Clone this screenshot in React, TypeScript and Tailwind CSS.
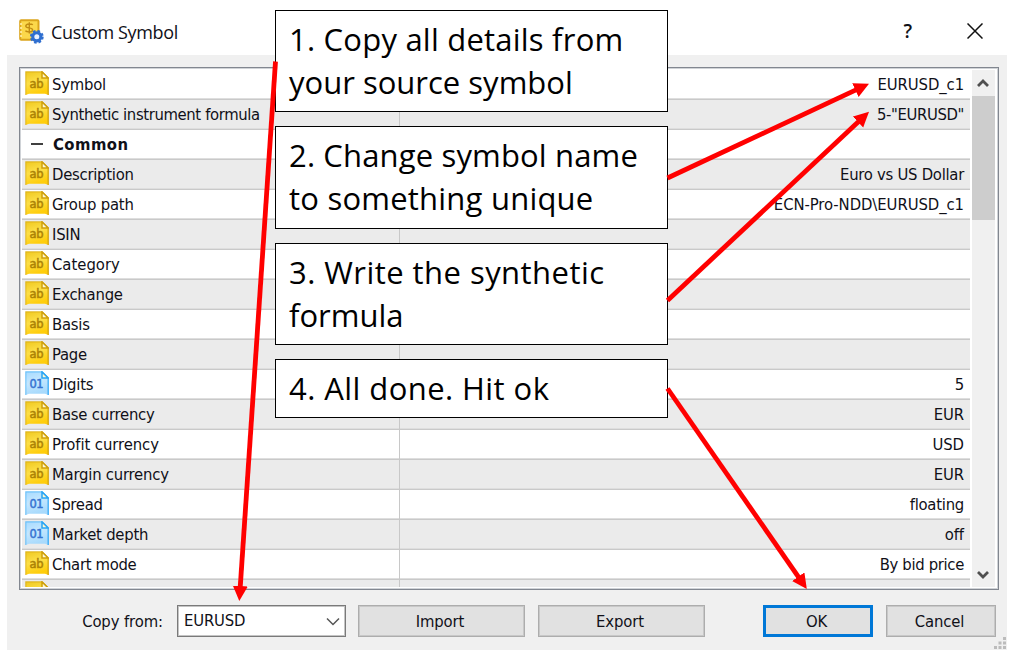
import type { ReactNode } from "react";

type Row = { name: string; value?: string; kind?: "text" | "number" | "group"; tracking?: string };

const rows: Row[] = [
  { name: "Symbol", value: "EURUSD_c1" },
  { name: "Synthetic instrument formula", value: '5-"EURUSD"', tracking: "tracking-[-0.37px]" },
  { name: "Common", kind: "group" },
  { name: "Description", value: "Euro vs US Dollar", tracking: "tracking-[-0.27px]" },
  { name: "Group path", value: "ECN-Pro-NDD\\EURUSD_c1", tracking: "tracking-[-0.2px]" },
  { name: "ISIN" },
  { name: "Category", tracking: "tracking-[0px]" },
  { name: "Exchange" },
  { name: "Basis" },
  { name: "Page" },
  { name: "Digits", value: "5", kind: "number" },
  { name: "Base currency", value: "EUR" },
  { name: "Profit currency", value: "USD", tracking: "tracking-[-0.07px]" },
  { name: "Margin currency", value: "EUR" },
  { name: "Spread", value: "floating", kind: "number", tracking: "tracking-[-0.25px]" },
  { name: "Market depth", value: "off", kind: "number" },
  { name: "Chart mode", value: "By bid price", tracking: "tracking-[-0.33px]" },
  { name: "" },
];

const arrows = [
  { x1: 275.5, y1: 61.5, x2: 239.3, y2: 601 },
  { x1: 667.5, y1: 178, x2: 869, y2: 83.8 },
  { x1: 667.5, y1: 300.5, x2: 869, y2: 111.8 },
  { x1: 667.5, y1: 388.5, x2: 806.8, y2: 589 },
];

function TypeIcon({ number, blank }: { number?: boolean; blank?: boolean }) {
  const edge = number ? "#2aa5f5" : "#cfa00c";
  return (
    <svg width="24" height="24" viewBox="0 0 24 24" className="mb-[3px] shrink-0" aria-hidden>
      <defs>
        <linearGradient id={number ? "num" : "txt"} x1="0" y1="0" x2="0.3" y2="1">
          <stop offset="0" stopColor={number ? "#a6daff" : "#efc81e"} />
          <stop offset="0.5" stopColor={number ? "#c4e7ff" : "#fcdf48"} />
          <stop offset="1" stopColor={number ? "#a8dafc" : "#ffcd0a"} />
        </linearGradient>
      </defs>
      <path d="M0.5 24V0.5H17L23.5 7V24L20 22.8H4Z" fill={`url(#${number ? "num" : "txt"})`} />
      <path d="M0.8 24V0.8H17" fill="none" stroke={edge} strokeWidth="1.2" opacity="0.5" />
      <path d="M17 0.8L23.2 7V24" fill="none" stroke={edge} strokeWidth="1.3" opacity="0.9" />
      <path d="M17 1V7H23.2Z" fill="#fff8d0" stroke={edge} strokeWidth="1.5" />
      {!blank && (
        <text
          x="11.3"
          y="17"
          textAnchor="middle"
          fontFamily="DejaVu Sans, sans-serif"
          fontSize="11.5"
          stroke={number ? "#3474d2" : "#ad8305"}
          strokeWidth="0.5"
          letterSpacing="-0.4"
          fill={number ? "#3474d2" : "#ad8305"}
        >
          {number ? "01" : "ab"}
        </text>
      )}
    </svg>
  );
}

function AppIcon() {
  return (
    <svg width="25" height="25" viewBox="0 0 25 25" className="mb-px" aria-hidden>
      <rect x="1.2" y="1.2" width="18.3" height="19.6" rx="1" fill="#fbd84b" stroke="#dba51c" strokeWidth="2" />
      <path d="M1 5h2M1 9h2M1 13h2M1 17h2" stroke="#fff1b5" strokeWidth="1.5" />
      <path
        d="M13.8 5.8C12.5 4.6 6.8 4.4 6.8 7.2C6.8 9.8 13.6 8 13.6 10.9C13.6 13.5 7.6 13.2 6.4 11.8M10.3 3.2V14.6"
        fill="none"
        stroke="#c28c12"
        strokeWidth="1.4"
      />
      <circle cx="17.8" cy="17.8" r="5.6" fill="#2f6fd0" />
      <circle
        cx="17.8"
        cy="17.8"
        r="5.9"
        fill="none"
        stroke="#2f6fd0"
        strokeWidth="2"
        strokeDasharray="2.6 2.03"
      />
      <circle cx="17.8" cy="17.8" r="2.5" fill="#e9f2ff" />
    </svg>
  );
}

function PropertyRow({ row, shaded }: { row: Row; shaded: boolean }) {
  if (row.kind === "group") {
    return (
      <div className="flex h-[30px] shrink-0 items-center border-b border-[#c9c9c9] bg-white pl-[9px] shadow-[inset_0_-1px_0_#dedede]">
        <span className="mb-px h-[2px] w-3 bg-[#404040]" />
        <span className="ml-[10px] pt-px text-[16.5px] font-bold tracking-[0.45px]">{row.name}</span>
      </div>
    );
  }
  return (
    <div
      className={`flex h-[30px] shrink-0 border-b border-[#c9c9c9] shadow-[inset_0_-1px_0_#dedede] ${shaded ? "bg-[#ebebeb]" : "bg-white"}`}
    >
      <div className="flex w-[378px] shrink-0 items-center gap-[3px] border-r border-[#c8c8c8] pl-[3px]">
        <TypeIcon number={row.kind === "number"} blank={!row.name} />
        <span className={`pt-px whitespace-nowrap ${row.tracking ?? "tracking-[-0.22px]"}`}>{row.name}</span>
      </div>
      <div className="flex flex-1 items-center justify-end pr-[6px]">
        <span className={`pt-px whitespace-nowrap ${row.name === "Group path" ? "tracking-[-0.07px]" : row.tracking ?? "tracking-[-0.1px]"}`}>
          {row.value}
        </span>
      </div>
    </div>
  );
}

function Chevron({ up }: { up?: boolean }) {
  return (
    <svg width="12" height="10" viewBox="0 0 12 10" className="mr-px shrink-0" aria-hidden>
      <path d={up ? "M1 8L6 3L11 8" : "M1 2L6 7L11 2"} fill="none" stroke="#505050" strokeWidth="2.8" />
    </svg>
  );
}

function Button({ className, children }: { className: string; children: ReactNode }) {
  return (
    <button className={`flex h-8 shrink-0 items-center justify-center bg-[#e1e1e1] pt-[2px] pr-[3px] tracking-[-0.1px] ${className}`}>
      {children}
    </button>
  );
}

function Callout({ className, children }: { className: string; children: ReactNode }) {
  return (
    <div
      className={`absolute left-[275px] w-[393px] border border-black bg-white pt-[7px] pl-[13px] font-['Open_Sans',sans-serif] text-[31px] leading-[43px] whitespace-nowrap text-black ${className}`}
    >
      {children}
    </div>
  );
}

export default function App() {
  return (
    <div className="relative h-[658px] w-[1018px] overflow-hidden bg-white font-['DejaVu_Sans_Condensed','DejaVu_Sans',sans-serif] text-[16.5px] leading-none tracking-[-0.2px] text-[#101018]">
      <div className="flex h-[650px] w-[1007px] flex-col pl-[7px]">
        <header className="flex h-[55px] shrink-0 items-center pt-[8px] pr-6 pl-3">
          <AppIcon />
          <h1 className="ml-[7px] font-['Open_Sans',sans-serif] text-[18px] tracking-[-0.35px]">Custom Symbol</h1>
          <span className="ml-auto font-['Open_Sans',sans-serif] text-[19px] font-semibold">?</span>
          <svg width="16" height="16" viewBox="0 0 16 16" className="mt-[-2px] ml-[55px]" aria-hidden>
            <path d="M0.5 0.5L15.5 15.5M15.5 0.5L0.5 15.5" stroke="#111" strokeWidth="1.5" />
          </svg>
        </header>

        <main className="flex flex-1 flex-col bg-[#f0f0f0] pt-3 pl-3">
          <div className="flex h-[523px] w-[980px] border border-[#828790] bg-white pt-[2px] pr-[3px] pb-[2px] pl-[2px] shadow-[inset_0_0_0_1px_#d0d3d7]">
            <div className="flex w-[948px] flex-col overflow-hidden">
              {rows.map((row, i) => (
                <PropertyRow key={i} row={row} shaded={i % 2 === 1} />
              ))}
            </div>
            <div className="ml-[2px] flex w-[23px] flex-col items-center bg-[#f0f0f0]">
              <div className="flex h-[26px] items-center">
                <Chevron up />
              </div>
              <div className="h-[124px] w-full bg-[#cdcdcd]" />
              <div className="mt-auto flex h-[24px] items-center">
                <Chevron />
              </div>
            </div>
          </div>

          <footer className="mt-[15px] flex items-start">
            <span className="w-[144px] pt-[9px] text-right tracking-[-0.1px]">Copy from:</span>
            <div className="ml-[14px] flex h-8 w-[169px] items-center justify-between border-[1.5px] border-[#7a7a7a] bg-white pr-[5px] pl-[6px] shadow-[inset_0_0_0_1px_#c4c4c4]">
              <span className="tracking-[-0.15px]">EURUSD</span>
              <svg width="14" height="9" viewBox="0 0 14 9" aria-hidden>
                <path d="M1 1.5L7 7.5L13 1.5" fill="none" stroke="#555" strokeWidth="1.5" />
              </svg>
            </div>
            <Button className="ml-3 w-[167px] border-[1.5px] border-[#adadad] shadow-[inset_0_0_0_1px_#c8c8c8]">Import</Button>
            <Button className="ml-[13px] w-[167px] border-[1.5px] border-[#adadad] shadow-[inset_0_0_0_1px_#c8c8c8]">Export</Button>
            <Button className="ml-[58px] w-[110px] border-[3px] border-[#0078d7]">OK</Button>
            <Button className="ml-[13px] w-[110px] border-[1.5px] border-[#adadad] shadow-[inset_0_0_0_1px_#c8c8c8]">Cancel</Button>
          </footer>
          <svg width="13" height="13" viewBox="0 0 13 13" className="mt-auto ml-auto" aria-hidden>
            <path
              d="M9 0h3v3h-3zM4.5 4.5h3v3h-3zM9 4.5h3v3h-3zM0 9h3v3h-3zM4.5 9h3v3h-3zM9 9h3v3h-3z"
              fill="#bcbcbc"
            />
          </svg>
        </main>
      </div>

      <Callout className="top-[10px] h-[102px]">
        <p className="tracking-[0.22px]">1. Copy all details from</p>
        <p className="tracking-[0px]">your source symbol</p>
      </Callout>
      <Callout className="top-[126px] h-[103px]">
        <p className="tracking-[0.15px]">2. Change symbol name</p>
        <p className="tracking-[0.22px]">to something unique</p>
      </Callout>
      <Callout className="top-[243px] h-[102px]">
        <p className="tracking-[0.45px]">3. Write the synthetic</p>
        <p className="tracking-[0px]">formula</p>
      </Callout>
      <Callout className="top-[359px] h-[59px]">
        <p className="tracking-[0.43px]">4. All done. Hit ok</p>
      </Callout>

      <svg width="1018" height="658" viewBox="0 0 1018 658" className="pointer-events-none absolute inset-0" aria-hidden>
        <defs>
          <marker id="head" markerUnits="userSpaceOnUse" markerWidth="16" markerHeight="16" refX="15" refY="7.5" orient="auto">
            <path d="M0 0L15 7.5L0 15Z" fill="#ff0000" />
          </marker>
        </defs>
        {arrows.map((a) => {
          // the shaft ends inside the head so that the tip stays sharp
          const len = Math.hypot(a.x2 - a.x1, a.y2 - a.y1);
          const t = (len - 12) / len;
          const x = a.x1 + (a.x2 - a.x1) * t;
          const y = a.y1 + (a.y2 - a.y1) * t;
          return (
            <g key={a.y2}>
              <path d={`M${a.x1} ${a.y1}L${x} ${y}`} stroke="#ff0000" strokeWidth="4.8" />
              <path d={`M${a.x1} ${a.y1}L${a.x2} ${a.y2}`} stroke="none" fill="none" markerEnd="url(#head)" />
            </g>
          );
        })}
      </svg>
    </div>
  );
}
